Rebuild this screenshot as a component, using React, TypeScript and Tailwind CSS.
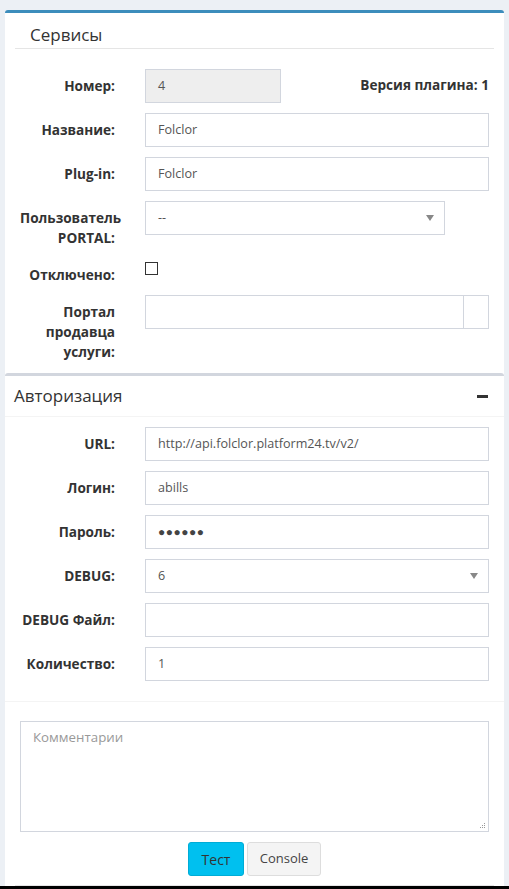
import React from "react";

const F = { fontFamily: '"Open Sans", "Liberation Sans", sans-serif' };

function Label({ children }: { children: React.ReactNode }) {
  return (
    <div className="w-[125px] shrink-0 pr-[15px] pl-[15px] text-right text-[13.6px] font-bold leading-[20px] text-[#333] pt-[7px]">
      {children}
    </div>
  );
}

function Input({ value, bg = "bg-white", className = "", type }: { value?: string; bg?: string; className?: string; type?: string }) {
  return (
    <div
      className={`h-[34px] border border-[#d2d6de] ${bg} px-[12px] flex items-center text-[12.6px] text-[#555] ${className}`}
    >
      {type === "password" ? <span className="tracking-[0.5px] text-[12px] text-[#444]">●●●●●●</span> : value}
    </div>
  );
}

function Select({ value, className = "" }: { value: string; className?: string }) {
  return (
    <div
      className={`h-[34px] border border-[#d2d6de] bg-white pl-[12px] pr-[10px] flex items-center justify-between text-[12.6px] text-[#555] ${className}`}
    >
      <span>{value}</span>
      <svg width="8" height="6" viewBox="0 0 8 6">
        <path d="M0 0 L8 0 L4 6 Z" fill="#888" />
      </svg>
    </div>
  );
}

function Row({ label, children, mb = "mb-[10px]" }: { label: React.ReactNode; children: React.ReactNode; mb?: string }) {
  return (
    <div className={`flex ${mb}`}>
      <Label>{label}</Label>
      <div className="flex-1 min-w-0 pl-[15px] pr-[15px]">{children}</div>
    </div>
  );
}

export default function App() {
  return (
    <div className="h-[889px] overflow-hidden bg-[#ecf0f5] pt-[10px] flex flex-col" style={F}>
      <div className="mx-[5px] bg-white rounded-t-[3px] border-t-[3px] border-[#3c8dbc]">
        <div className="mx-[10px] border-b border-[#e5e5e5] pl-[15px] pt-[10px] pb-[1px]">
          <div className="text-[17px] leading-[24px] text-[#333]">Сервисы</div>
        </div>
        <div className="pt-[20px]">
          <div className="flex mb-[10px]">
            <Label>Номер:</Label>
            <div className="flex-1 pl-[15px] pr-[15px] flex items-center justify-between">
              <Input value="4" bg="bg-[#eeeeee]" className="w-[136px]" />
              <span className="text-[13.6px] font-bold text-[#333] pb-[1px]">Версия плагина: 1</span>
            </div>
          </div>
          <Row label="Название:">
            <Input value="Folclor" />
          </Row>
          <Row label="Plug-in:">
            <Input value="Folclor" />
          </Row>
          <Row label={<>Пользователь PORTAL:</>}>
            <Select value="--" className="w-[300px]" />
          </Row>
          <div className="flex mb-[10px]">
            <Label>Отключено:</Label>
            <div className="flex-1 pl-[15px]">
              <div className="w-[13px] h-[13px] border border-[#333] bg-white mt-[4px]" />
            </div>
          </div>
          <Row label={<>Портал продавца услуги:</>} mb="mb-[11px]">
            <div className="flex h-[34px] border border-[#d2d6de]">
              <div className="flex-1" />
              <div className="w-[25px] border-l border-[#d2d6de]" />
            </div>
          </Row>
        </div>
        <div className="border-t-[3px] border-[#d2d6de] rounded-t-[3px]">
          <div className="flex items-center justify-between pl-[9px] pr-[16px] h-[41px] border-b border-[#f4f4f4]">
            <span className="text-[17px] text-[#333]">Авторизация</span>
            <span className="w-[11px] h-[3px] bg-[#333] block" />
          </div>
          <div className="pt-[10px]">
            <Row label="URL:">
              <Input value="http://api.folclor.platform24.tv/v2/" />
            </Row>
            <Row label="Логин:">
              <Input value="abills" />
            </Row>
            <Row label="Пароль:">
              <Input type="password" />
            </Row>
            <Row label="DEBUG:">
              <Select value="6" />
            </Row>
            <Row label="DEBUG Файл:">
              <Input value="" />
            </Row>
            <Row label="Количество:" mb="mb-[20px]">
              <Input value="1" />
            </Row>
          </div>
        </div>
        <div className="border-t border-[#f4f4f4] px-[15px] pt-[19px]">
          <div className="relative h-[111px] border border-[#d2d6de] px-[12px] pt-[6px] text-[13.3px] text-[#999]">
            Комментарии
            <svg className="absolute right-[2px] bottom-[2px]" width="7" height="7" viewBox="0 0 7 7">
              <rect x="5" y="1" width="1" height="1" fill="#999" />
              <rect x="3" y="3" width="1" height="1" fill="#999" />
              <rect x="5" y="3" width="1" height="1" fill="#999" />
              <rect x="1" y="5" width="1" height="1" fill="#999" />
              <rect x="3" y="5" width="1" height="1" fill="#999" />
              <rect x="5" y="5" width="1" height="1" fill="#999" />
            </svg>
          </div>
          <div className="flex justify-center gap-[3px] pt-[10px] pb-[9px]">
            <button className="h-[34px] w-[56px] rounded-[3px] bg-[#00c0ef] border border-[#00acd6] text-[14px] text-[#333]">
              Тест
            </button>
            <button className="h-[34px] w-[74px] rounded-[3px] bg-[#f4f4f4] border border-[#ddd] text-[13px] text-[#444]">
              Console
            </button>
          </div>
          <div className="border-t border-[#e5e5e5] mx-[-5px]" />
        </div>
      </div>
      <div className="flex-1 bg-black" />
    </div>
  );
}
